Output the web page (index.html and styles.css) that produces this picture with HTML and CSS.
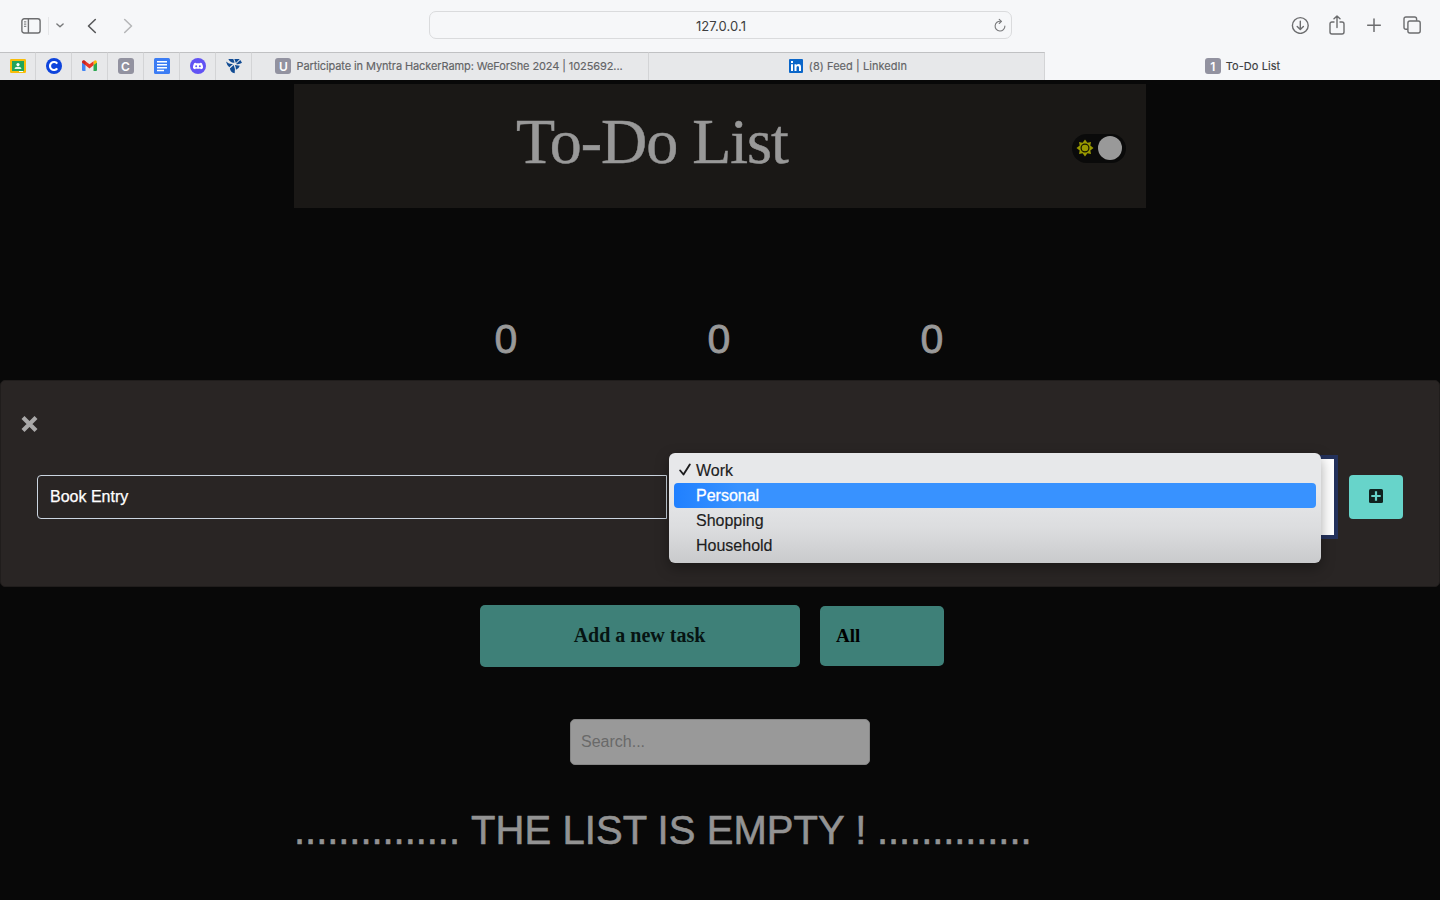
FILE: index.html
```html
<!DOCTYPE html>
<html lang="en">
<head>
<meta charset="utf-8">
<title>To-Do List</title>
<link rel="stylesheet" href="styles.css">
</head>
<body>
<header class="toolbar">
  <div class="tools tools-left">
    <svg class="i-side" width="20" height="16" viewBox="0 0 20 16" fill="none" stroke="#6c6d6f" stroke-width="1.4"><rect x=".9" y=".8" width="18.2" height="14.2" rx="2.3"/><path d="M7.4 1v14"/><path d="M3 3.9h2.3M3 6.1h2.3M3 8.3h2.3" stroke-width="1"/></svg>
    <span class="rule"></span>
    <svg class="i-down" width="8" height="5" viewBox="0 0 8 5" fill="none" stroke="#77787a" stroke-width="1.4" stroke-linecap="round" stroke-linejoin="round"><path d="M.9.9 4 3.8 7.1.9"/></svg>
    <svg class="i-back" width="10" height="16" viewBox="0 0 10 16" fill="none" stroke="#58595b" stroke-width="1.6" stroke-linecap="round" stroke-linejoin="round"><path d="M8.3 1.5 1.5 8l6.8 6.5"/></svg>
    <svg class="i-fwd" width="10" height="16" viewBox="0 0 10 16" fill="none" stroke="#b6b7b9" stroke-width="1.6" stroke-linecap="round" stroke-linejoin="round"><path d="M1.700 1.500 8.500 8l-6.800 6.500"/></svg>
  </div>
  <div class="address"><span>127.0.0.1</span>
    <svg class="i-reload" width="12" height="14" viewBox="0 0 12 14" fill="none" stroke="#77787a" stroke-width="1.1" stroke-linecap="round" stroke-linejoin="round"><path d="M10.900 8.100A4.900 4.900 0 1 1 6.700 3.300"/><path d="M5.200 1.300 7.500 3.400 5.200 5.500"/></svg>
  </div>
  <div class="tools tools-right">
    <svg width="18" height="18" viewBox="0 0 18 18" fill="none" stroke="#6c6d6f" stroke-width="1.400" stroke-linecap="round" stroke-linejoin="round"><circle cx="9.300" cy="9.500" r="7.900"/><path d="M9.300 5.300v8M6.200 10.400l3.100 3.100 3.100-3.100"/></svg>
    <svg width="16" height="20" viewBox="0 0 16 20" fill="none" stroke="#6c6d6f" stroke-width="1.400" stroke-linecap="round" stroke-linejoin="round"><path d="M5 7H3Q1 7 1 9v8q0 2 2 2h10q2 0 2-2V9q0-2-2-2h-2M8 12.500V1M5 3.800 8 .9l3 2.900"/></svg>
    <svg width="14" height="14" viewBox="0 0 14 14" stroke="#6c6d6f" stroke-width="1.500" stroke-linecap="round"><path d="M7 .9v12.600M.7 7.200h12.600"/></svg>
    <svg width="18" height="18" viewBox="0 0 18 18" fill="none" stroke="#6c6d6f" stroke-width="1.400"><rect x="4.900" y="5" width="12.300" height="12" rx="2"/><path d="M4.700 13.200H3q-2 0-2-2V3q0-2 2-2h8.600q2 0 2 2v1.800"/></svg>
  </div>
</header>
<nav class="tabs">
  <div class="pin"><svg width="16" height="14" viewBox="0 0 16 14"><rect width="16" height="14" rx="1.200" fill="#f8bd08"/><rect x="2" y="2" width="12" height="10" fill="#22a45a"/><circle cx="8" cy="5.600" r="1.600" fill="#fff"/><path d="M4.600 10q0-2.300 3.400-2.300t3.400 2.300z" fill="#e4f4e9"/><path d="M9 12h4v1H9z" fill="#fff"/></svg></div>
  <div class="pin"><svg width="16" height="16" viewBox="0 0 16 16"><circle cx="8" cy="8" r="8" fill="#0d43dc"/><path d="M11.200 5.600a4 4 0 1 0 0 4.800" fill="none" stroke="#fff" stroke-width="2.200"/></svg></div>
  <div class="pin"><svg width="15" height="12" viewBox="0 0 15 12"><path d="M0 2.500V10q0 1 1 1h2.500V4z" fill="#4285f4"/><path d="M15 2.500V10q0 1-1 1h-2.500V4z" fill="#2ba850"/><path d="M11.500 1.500 13 .3q2 0 2 2.200l-3.500 2.800z" fill="#fbbc04"/><path d="M0 2.500Q.2-.2 2.800.7l4.700 3.600L11.500 1.300v4L7.500 8.400l-4-3.100z" fill="#ea3425"/><path d="M0 2.300 3.500 5V1.200L2.400.4Q0 .1 0 2.300z" fill="#c5221f"/></svg></div>
  <div class="pin"><span class="badge">C</span></div>
  <div class="pin"><svg width="16" height="16" viewBox="0 0 16 16"><rect width="16" height="16" rx="1.500" fill="#3b7cf4"/><path d="M3 3.750h10M3 6.750h10M3 9.750h10M3 12.500h7" stroke="#fff" stroke-width="1.500"/></svg></div>
  <div class="pin"><svg width="16" height="16" viewBox="0 0 16 16"><circle cx="8" cy="8" r="8" fill="#6253f4"/><path d="M5.600 4.700Q4.300 5 4 5.500 2.900 7.600 3 10q.9 1.200 2.200 1.300l.7-.9q2.100.5 4.200 0l.7.9Q12.100 11.200 13 10q.1-2.400-1-4.500-.3-.5-1.600-.8l-.4.600H6z" fill="#fff"/><circle cx="6.200" cy="8.200" r="1" fill="#6253f4"/><circle cx="9.800" cy="8.200" r="1" fill="#6253f4"/></svg></div>
  <div class="pin"><svg width="16" height="15" viewBox="0 0 16 15" fill="#114b93"><path d="M2.300 0H7.300L8.600 3.600Q5 4.600 2.300 0zM8.300 0h5.500L9.900 3.900zM14.300 1 16 3.800q-2.500 2-6 1.300zM0 2.500q3.500 3 7 2.400L3.300 8.200Q1 6.500 0 2.500zM3.900 9.500 7.700 6q2 4 1 8.300Q4.500 13.500 3.900 9.500zM8.800 6l5 .8Q13 9.700 10 10.800 10 8 8.800 6z"/></svg></div>
  <div class="tab tab-one"><span class="badge">U</span><span class="t-one">Participate in Myntra HackerRamp: WeForShe 2024 | 1025692...</span></div>
  <div class="tab tab-two"><svg width="14" height="14" viewBox="0 0 14 14"><rect width="14" height="14" rx="1" fill="#0a66c9"/><path d="M2 5.300h2V12H2zM2 2h2v2H2zM5.500 5.300h2v.9q.7-1.100 2-1.100Q12 5.100 12 8v4h-2V8.500Q10 7 8.900 7 7.500 7 7.500 8.600V12h-2z" fill="#fff"/></svg><span class="t-two">(8) Feed | LinkedIn</span></div>
  <div class="tab active"><span class="badge">1</span><span class="t-three">To-Do List</span></div>
</nav>
<main class="page">
  <section class="banner">
    <h1>To-Do List</h1>
    <div class="toggle">
      <svg width="18" height="18" viewBox="-9 -9 18 18"><path d="M0-8.500 2.400-5.300 6-6 5.300-2.400 8.500 0 5.300 2.400 6 6 2.400 5.300 0 8.500-2.400 5.300-6 6-5.300 2.400-8.500 0-5.300-2.400-6-6-2.400-5.300z" fill="#989800"/><circle r="3.900" fill="#989800" stroke="#151500" stroke-width="1.200"/></svg>
      <span class="knob"></span>
    </div>
  </section>
  <section class="counts"><span>0</span><span>0</span><span>0</span></section>
  <section class="actions"><button class="add">Add a new task</button><div class="filter">All</div></section>
  <input class="search" placeholder="Search...">
  <p class="empty"><span class="e-left">...............</span><span class="e-mid">THE LIST IS EMPTY !</span><span class="e-right">..............</span></p>
  <section class="modal">
    <svg class="close" width="17" height="16" viewBox="0 0 17 16" stroke="#a9a8a8" stroke-width="4.200" stroke-linecap="butt"><path d="m2 1.500 13 13M15 1.500l-13 13"/></svg>
    <div class="form">
      <div class="entry">Book Entry</div>
      <div class="select">
        <ul class="menu">
          <li><svg class="check" width="12" height="13" viewBox="0 0 12 13" fill="none" stroke="#1d1d1e" stroke-width="1.900" stroke-linecap="round" stroke-linejoin="round"><path d="m1.200 7.500 3.300 4L10.800 1.500"/></svg>Work</li>
          <li class="chosen">Personal</li>
          <li>Shopping</li>
          <li>Household</li>
        </ul>
      </div>
      <button class="plus"><svg width="14" height="14" viewBox="0 0 14 14"><rect width="14" height="14" rx="1.500" fill="#10221f"/><path d="M7 2.300v9.400M2.300 7h9.400" stroke="#67d4ca" stroke-width="2.200"/></svg></button>
    </div>
  </section>
</main>
</body>
</html>
```
FILE: styles.css
```css
* { box-sizing: border-box; }
body { margin: 0; width: 1440px; height: 900px; overflow: hidden; background: #080808; font-family: "Liberation Sans", Arial, sans-serif; }
svg { display: block; flex: none; }
button { border: 0; padding: 0; font: inherit; }

.toolbar { height: 52px; background: #f6f7f9; display: grid; grid-template-columns: 429px 583px 428px; align-items: start; }
.tools { display: flex; align-items: center; height: 51px; }
.tools-left { padding-left: 21px; }
.rule { width: 1px; height: 18px; background: #e5e6e8; margin: 0 7px; }
.i-back { margin-left: 23px; }
.i-fwd { margin-left: 26px; }
.tools-right { height: 50px; justify-content: flex-end; gap: 21px; padding-right: 19px; }
.tools-right svg:nth-child(1) { margin-right: -1px; }
.tools-right svg:nth-child(2) { margin-right: 1px; }
.tools-right svg:nth-child(3) { margin-right: 1px; }
.address { margin-top: 11px; height: 28px; border: 1px solid #dadbdd; border-radius: 7px; display: grid; grid-template-columns: 1fr 12px; align-items: center; padding-right: 5px; font: 400 13px Inter, sans-serif; color: #3d3e40; letter-spacing: .08px; }
.address span { text-align: center; padding: 2px 0 0 18px; }

.tabs { height: 28px; display: flex; background: #e7e8ea; font: 11px Inter, sans-serif; color: #636466; }
.pin, .tab { display: flex; align-items: center; justify-content: center; padding-bottom: 1px; border-top: 1px solid #c0c1c3; border-right: 1px solid #d3d4d6; }
.pin { width: 36px; }
.tab { gap: 5px; white-space: nowrap; }
.tab-one { width: 397px; padding-right: 2px; }
.tab-two { width: 396px; gap: 6px; padding-left: 3px; }
.active { width: 395px; padding-left: 1px; background: #f6f7f9; border-color: transparent; color: #3c3d3f; }
.badge { width: 16px; height: 16px; border-radius: 3px; background: #9292a0; color: #fff; font: 600 12px/17px Inter, sans-serif; text-align: center; flex: none; }
.t-one { letter-spacing: -.1px; -webkit-text-stroke: .15px; }
.t-two { letter-spacing: .06px; -webkit-text-stroke: .15px; }
.t-three { letter-spacing: .06px; -webkit-text-stroke: .15px; }

.page { position: relative; height: 820px; padding-top: 4px; display: flex; flex-direction: column; align-items: center; background: #080808; }
.banner { width: 852px; height: 124px; background: #1a1816; display: grid; grid-template-columns: 222px 1fr 54px; column-gap: 0; padding-right: 20px; align-items: start; }
.banner h1 { grid-column: 2; margin: 21px 0 0; font: 400 64px/74px "Liberation Serif", serif; letter-spacing: -1px; color: #999; white-space: nowrap; -webkit-text-stroke: .5px #999; }
.toggle { width: 54px; height: 29px; margin-top: 50px; border-radius: 15px; background: #0a0a0a; display: flex; align-items: center; padding: 0 4px 1px; justify-content: space-between; }
.knob { width: 24px; height: 24px; border-radius: 50%; background: #999; }
.counts { width: 639px; margin: 106px 0 0; padding-right: 2px; display: grid; grid-template-columns: repeat(3, 213px); text-align: center; font-size: 41px; line-height: 50px; color: #999; -webkit-text-stroke: .8px #999; }
.counts span { padding-right: 2px; }
.actions { margin: 241px 0 0; width: 480px; height: 62px; padding-right: 16px; display: flex; align-items: center; gap: 20px; font: 700 19px "Liberation Serif", serif; }
.add { width: 320px; height: 62px; padding: 0 1px 1px 0; border-radius: 5px; background: #3e8078; color: #061412; font-size: 20px; }
.filter { width: 124px; height: 60px; border-radius: 5px; background: #3e8078; padding-left: 16px; line-height: 60px; color: #000; }
.search { width: 300px; height: 46px; margin: 52px 0 0; border: 1px solid #858585; border-radius: 5px; background: #999; padding: 0 10px; font: 16px "Liberation Sans", Arial, sans-serif; }
.search::placeholder { color: #696969; opacity: 1; }
.empty { width: 852px; margin: 42px 0 0; font-size: 40px; line-height: 46px; color: #939393; display: flex; white-space: pre; -webkit-text-stroke: .6px #939393; }
.e-left { width: 177px; letter-spacing: -.05px; }
.e-mid { width: 406px; letter-spacing: .07px; }
.e-right { letter-spacing: -.08px; }

.modal { position: absolute; left: 0; top: 300px; width: 1440px; height: 207px; border: 1px solid #201d1c; border-radius: 5px; background: #292524; padding: 35px 20px 0; }
.form { display: flex; align-items: center; margin: 21px 16px 0; height: 88px; }
.entry { width: 630px; height: 44px; border: 1px solid #cbd5e0; border-radius: 4px 0 0 4px; padding-left: 12px; line-height: 41px; font-size: 16px; color: #fff; -webkit-text-stroke: .25px #fff; }
.select { position: relative; width: 668px; height: 84px; margin-left: 3px; border: 4px solid #24325c; background: #fff; }
.plus { width: 54px; height: 44px; margin-left: 11px; border-radius: 4px; background: #67d4ca; display: flex; align-items: center; justify-content: center; padding-bottom: 2px; }
.menu { position: absolute; left: -5px; top: -6px; width: 652px; height: 110px; margin: 0; padding: 5px; list-style: none; border-radius: 6px; background: linear-gradient(#e7e8ea 0 35%, #dcdddf 68%, #c9cacc); box-shadow: 0 5px 14px rgba(0, 0, 0, .35); font-size: 16px; color: #1d1d1e; -webkit-text-stroke: .15px; }
.menu li { position: relative; height: 25px; padding-left: 22px; line-height: 25px; }
.menu .chosen { background: linear-gradient(90deg, #2080ff, #3892ff 10%); border-radius: 4px; color: #fff; -webkit-text-stroke: .3px #fff; }
.check { position: absolute; left: 5px; top: 5px; }
```
